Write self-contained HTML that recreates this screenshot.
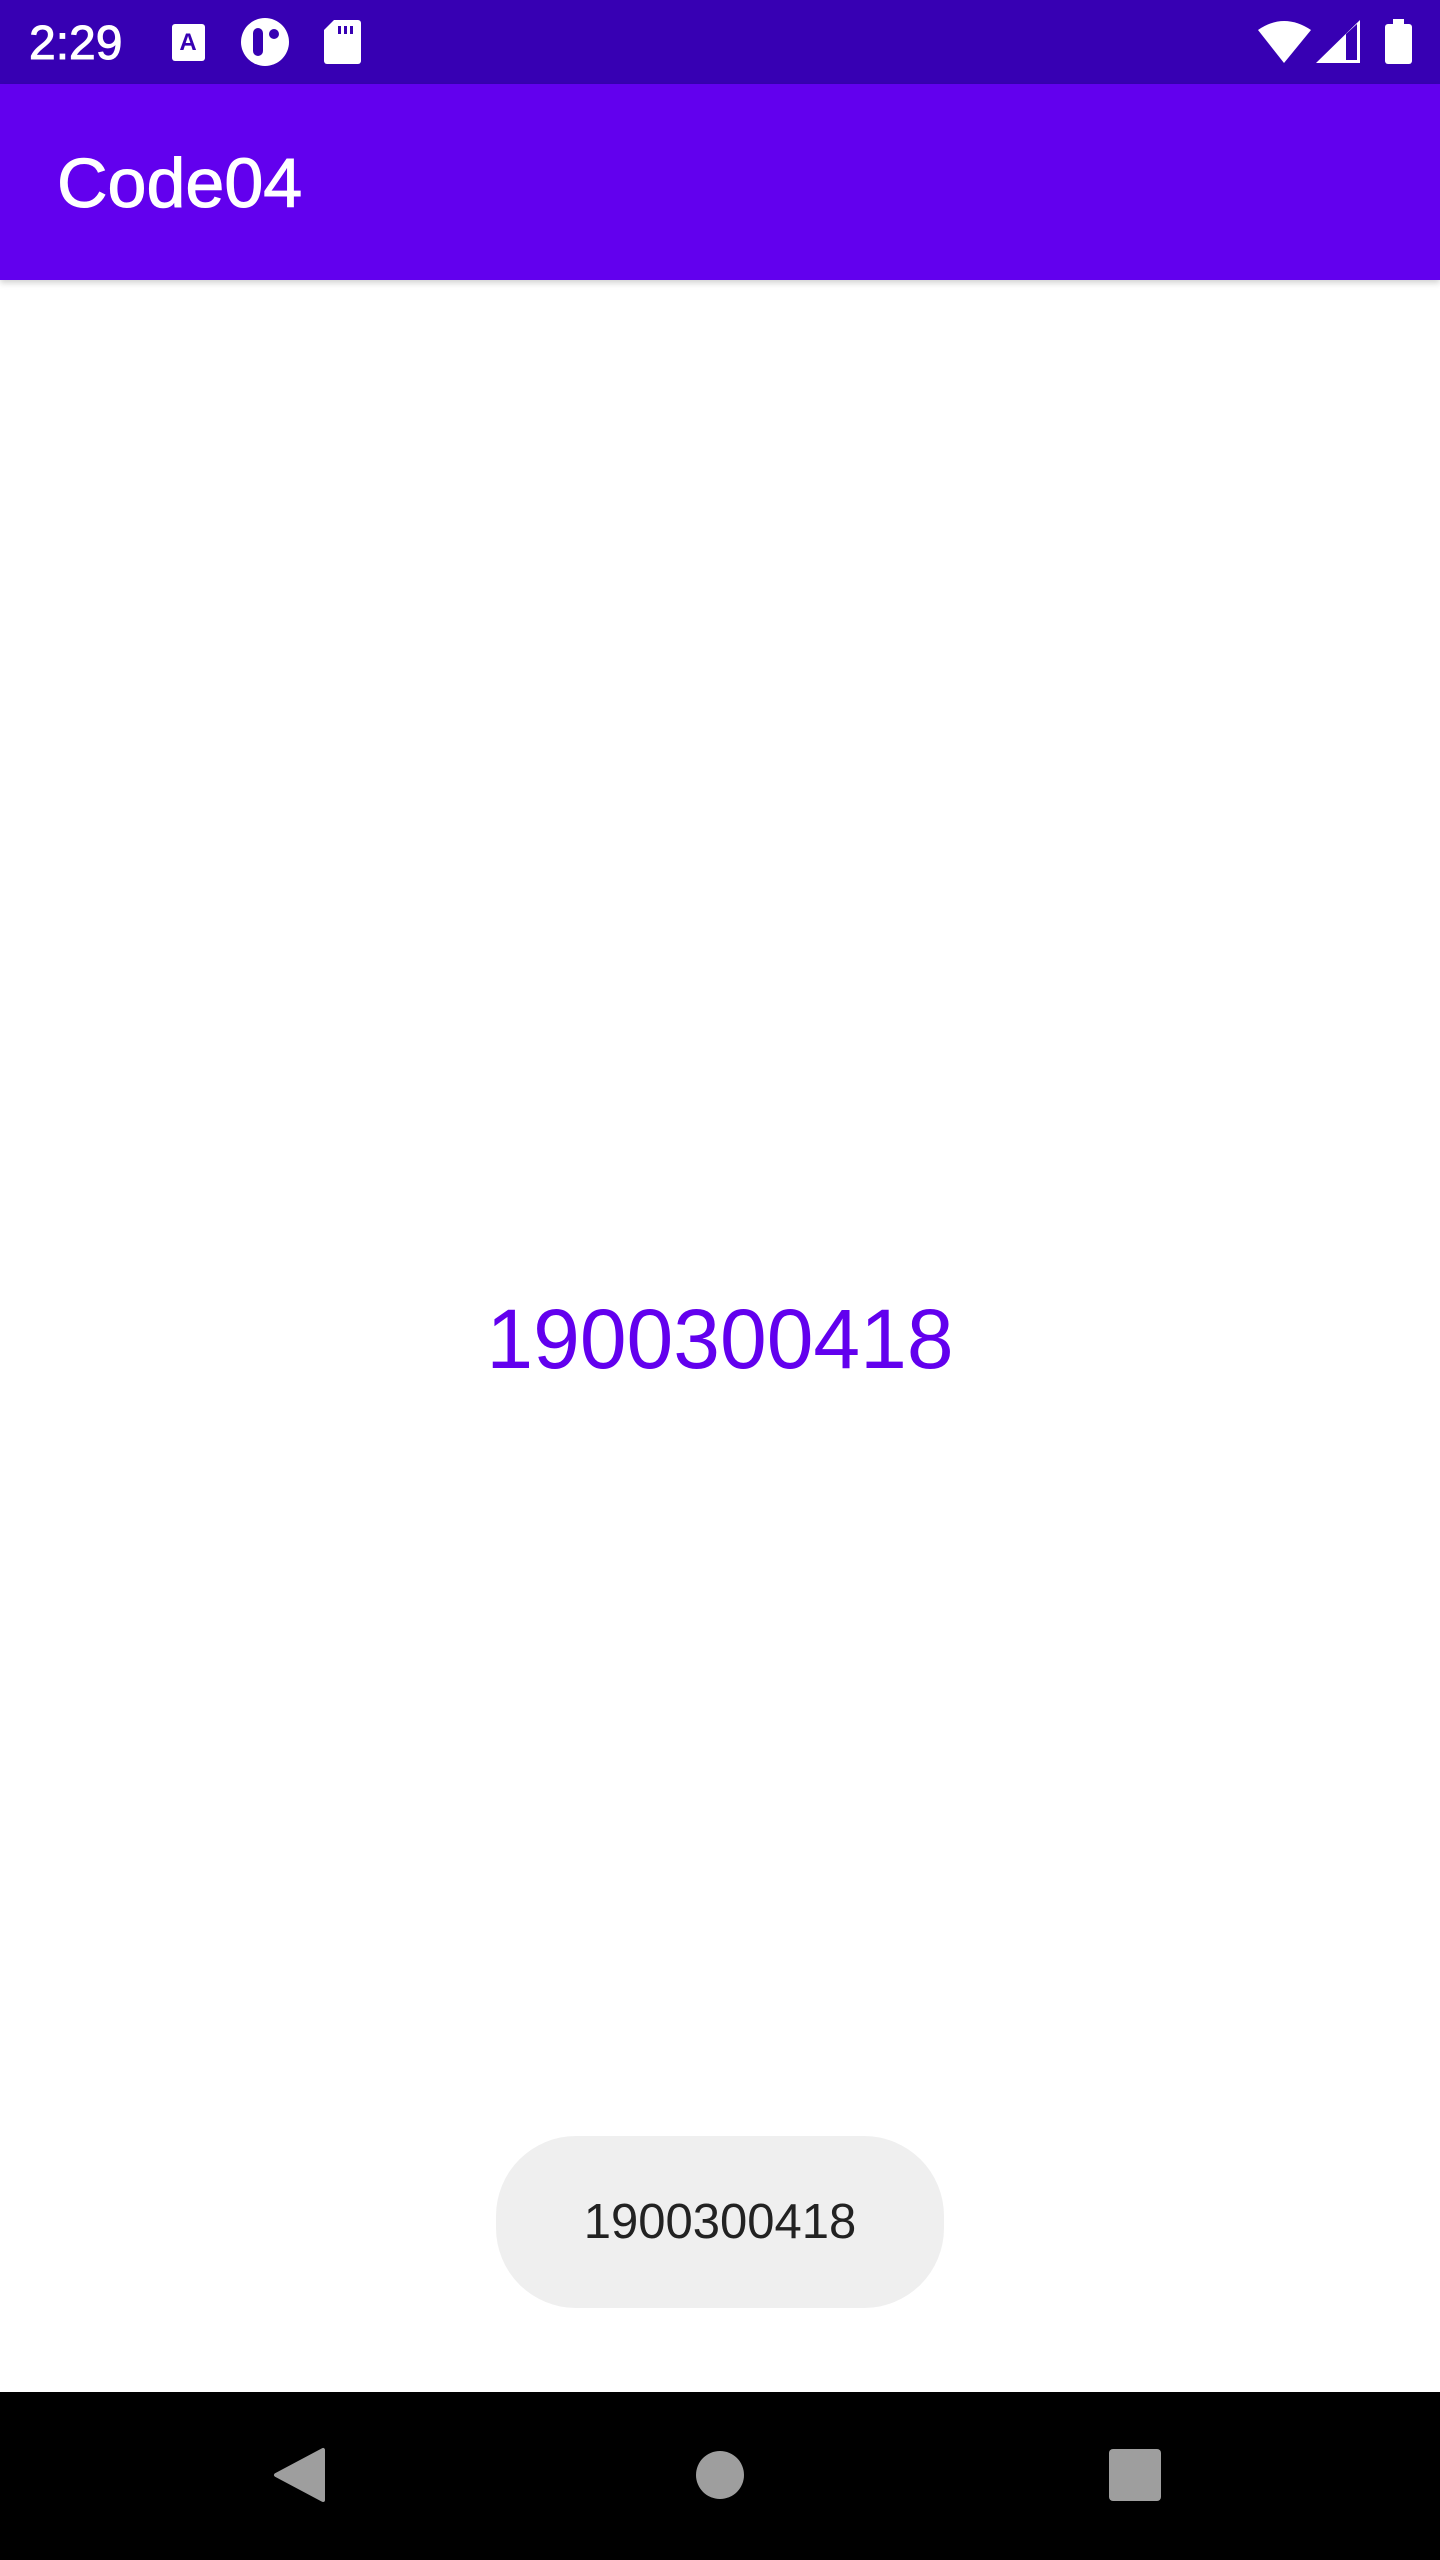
<!DOCTYPE html>
<html><head><meta charset="utf-8"><style>
html,body{margin:0;padding:0;width:1440px;height:2560px;overflow:hidden;background:#fff;font-family:"Liberation Sans",sans-serif}
.sb{position:absolute;left:0;top:0;width:1440px;height:84px;background:#3700B3}
.ab{position:absolute;left:0;top:84px;width:1440px;height:196px;background:#6200EE;box-shadow:0 3px 6px rgba(0,0,0,.18)}
.title{position:absolute;left:57px;top:143px;font-size:70px;color:#fff;line-height:80px;-webkit-text-stroke:1px #fff}
.time{position:absolute;left:29px;top:16px;font-size:48px;color:#fff;line-height:56px;-webkit-text-stroke:1px #fff}
.num{position:absolute;left:0;width:1440px;text-align:center;top:1290px;font-size:84px;line-height:98px;color:#6200EE}
.toast{position:absolute;left:496px;top:2136px;width:448px;height:172px;border-radius:80px;background:#efefef;text-align:center;line-height:172px;font-size:49px;color:#222}
.nav{position:absolute;left:0;top:2392px;width:1440px;height:168px;background:#000}
</style></head><body>
<div class="sb"></div>
<div class="time">2:29</div>
<svg style="position:absolute;left:0;top:0" width="1440" height="84">
<rect x="172" y="24" width="33" height="37" rx="3" fill="#fff"/>
<text x="188" y="50" font-size="24" font-weight="bold" fill="#3700B3" text-anchor="middle" font-family="Liberation Sans">A</text>
<circle cx="265" cy="42" r="24" fill="#fff"/>
<rect x="253" y="28" width="10" height="28" rx="5" fill="#3700B3"/>
<circle cx="274" cy="34" r="5" fill="#3700B3"/>
<path d="M334 20h24a3 3 0 0 1 3 3v38a3 3 0 0 1-3 3h-31a3 3 0 0 1-3-3v-31z" fill="#fff"/>
<rect x="338" y="26" width="3" height="8" fill="#3700B3"/><rect x="344" y="26" width="3" height="8" fill="#3700B3"/><rect x="350" y="26" width="3" height="8" fill="#3700B3"/>
<path d="M1258 30 Q1284 12 1311 30 L1284 63Z" fill="#fff"/>
<path d="M1316 63 L1360 20 V63Z" fill="#fff"/>
<path d="M1346 60 V34 L1357 24 V60Z" fill="#3700B3"/>
<rect x="1393" y="19" width="11" height="6" fill="#fff"/>
<rect x="1385" y="24" width="27" height="40" rx="3" fill="#fff"/>
</svg>
<div class="ab"></div>
<div class="title">Code04</div>
<div class="num">1900300418</div>
<div class="toast">1900300418</div>
<div class="nav"></div>
<svg style="position:absolute;left:0;top:2392px" width="1440" height="168">
<path d="M276 83 L323 58 V108Z" fill="#9e9e9e" stroke="#9e9e9e" stroke-width="4" stroke-linejoin="round"/>
<circle cx="720" cy="83" r="24" fill="#9e9e9e"/>
<rect x="1109" y="57" width="52" height="52" rx="4" fill="#9e9e9e"/>
</svg>
</body></html>
